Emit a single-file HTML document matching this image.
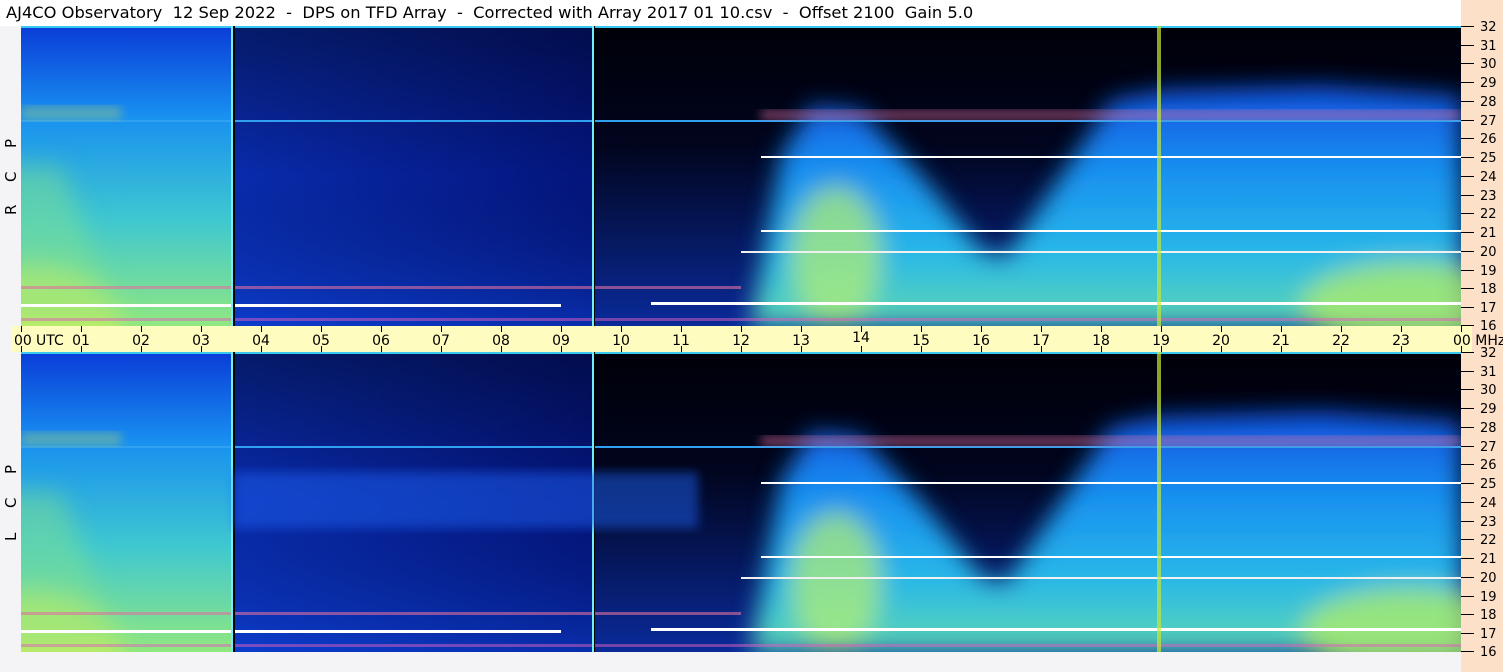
<!DOCTYPE html><html><head><style>
html,body{margin:0;padding:0;width:1503px;height:672px;overflow:hidden;background:#f4f4f7;font-family:"Liberation Sans",sans-serif}
#t{position:absolute;left:0;top:0;width:1503px;height:26px;background:#fff;font-family:"DejaVu Sans","Liberation Sans",sans-serif;font-size:16.3px;line-height:26px;white-space:pre;color:#000;padding-left:6px;box-sizing:border-box}
#r{position:absolute;left:1461px;top:0;width:42px;height:672px;background:#fde0c8}
svg{display:block}
</style></head><body>
<div id="t">AJ4CO Observatory  12 Sep 2022  -  DPS on TFD Array  -  Corrected with Array 2017 01 10.csv  -  Offset 2100  Gain 5.0</div>
<div id="r"></div>
<svg width="1503" height="672" style="position:absolute;left:0;top:0" xmlns="http://www.w3.org/2000/svg">
<defs>
<clipPath id="cp"><rect x="0" y="0" width="1440" height="300"/></clipPath>
<filter id="b" x="-10%" y="-10%" width="120%" height="120%"><feGaussianBlur stdDeviation="12"/></filter>
<filter id="b2"><feGaussianBlur stdDeviation="5"/></filter>
<linearGradient id="lg" x1="0" y1="0" x2="0" y2="1"><stop offset="0" stop-color="#0a3cd8"/><stop offset=".3" stop-color="#1890f0"/><stop offset=".65" stop-color="#40c8d0"/><stop offset="1" stop-color="#90e880"/></linearGradient>
<linearGradient id="mg" x1="0" y1="0" x2="1" y2="0"><stop offset="0" stop-color="#0a30c0"/><stop offset="1" stop-color="#04178a"/></linearGradient>
<linearGradient id="mv" x1="0" y1="0" x2="0" y2="1"><stop offset="0" stop-color="#000" stop-opacity=".45"/><stop offset=".5" stop-color="#000" stop-opacity=".1"/><stop offset="1" stop-color="#1050e0" stop-opacity=".4"/></linearGradient>
<linearGradient id="dg" x1="0" y1="0" x2="0" y2="1"><stop offset="0" stop-color="#000008"/><stop offset=".4" stop-color="#01051e"/><stop offset="1" stop-color="#0a2a9a"/></linearGradient>
<linearGradient id="cg" x1="0" y1="0" x2="0" y2="1"><stop offset="0" stop-color="#1050e0"/><stop offset=".35" stop-color="#1890f0"/><stop offset=".7" stop-color="#28b8e8"/><stop offset="1" stop-color="#60d8b0"/></linearGradient>
<g id="p">
<g clip-path="url(#cp)">
<rect x="0" y="0" width="1440" height="300" fill="#000"/>
<rect x="0" y="0" width="210" height="300" fill="url(#lg)"/>
<rect x="210" y="0" width="361" height="300" fill="url(#mg)"/>
<rect x="210" y="0" width="361" height="300" fill="url(#mv)"/>
<rect x="571" y="0" width="869" height="300" fill="url(#dg)"/>
<g filter="url(#b)">
<ellipse cx="10" cy="300" rx="90" ry="60" fill="#d8f050" opacity=".8"/>
<polygon points="100,300 40,140 -20,140 -20,300" fill="#80e090" opacity=".5"/>
<polygon points="730,300 760,130 790,80 840,85 900,150 960,225 985,232 1010,195 1060,120 1090,75 1140,65 1300,60 1440,70 1440,300" fill="url(#cg)"/>
<ellipse cx="815" cy="230" rx="45" ry="70" fill="#b8f070" opacity=".7"/>
<ellipse cx="1390" cy="280" rx="110" ry="45" fill="#b8f060" opacity=".7"/>
</g>
<rect x="0" y="0" width="1440" height="2" fill="#38c8f0"/>
<rect x="0" y="94" width="1440" height="2" fill="#30a0f0"/>
<rect x="740" y="84" width="700" height="10" fill="#e070a0" opacity=".55" filter="url(#b2)"/>
<rect x="0" y="80" width="100" height="14" fill="#d0e050" opacity=".35" filter="url(#b2)"/>
<rect x="740" y="130" width="700" height="2" fill="#fff"/>
<rect x="740" y="204" width="700" height="2" fill="#fff"/>
<rect x="720" y="225" width="720" height="2" fill="#f0f0f0"/>
<rect x="0" y="260" width="720" height="3" fill="#e070a0" opacity=".6"/>
<rect x="0" y="278" width="540" height="3" fill="#fff"/>
<rect x="630" y="276" width="810" height="3" fill="#fff"/>
<rect x="0" y="292" width="1440" height="3" fill="#e060c0" opacity=".5"/>
<rect x="1136" y="0" width="4" height="300" fill="#c8e830" opacity=".7"/>
<rect x="210" y="0" width="2" height="300" fill="#70f0ff"/>
<rect x="212" y="0" width="2" height="300" fill="#000"/>
<rect x="571" y="0" width="2" height="300" fill="#70f0ff"/>
<rect x="573" y="0" width="1" height="300" fill="#000"/>
</g>
</g>
</defs>
<use href="#p" x="21" y="26"/>
<use href="#p" x="21" y="352"/>
<rect x="234" y="472" width="464" height="56" fill="#1a60f0" opacity=".5" filter="url(#b2)"/>
<rect x="11" y="326" width="1461" height="26" fill="#fffcc0"/>
<g stroke="#000" stroke-width="1">
<path id="tk" d="M21.5 326v6M81.5 326v6M141.5 326v6M201.5 326v6M261.5 326v6M321.5 326v6M381.5 326v6M441.5 326v6M501.5 326v6M561.5 326v6M621.5 326v6M681.5 326v6M741.5 326v6M801.5 326v6M861.5 326v6M921.5 326v6M981.5 326v6M1041.5 326v6M1101.5 326v6M1161.5 326v6M1221.5 326v6M1281.5 326v6M1341.5 326v6M1401.5 326v6M1461.5 326v6"/>
<use href="#tk" y="20"/>
<path d="M1461 26.5h13M1461 45.5h13M1461 63.5h13M1461 82.5h13M1461 101.5h13M1461 120.5h13M1461 138.5h13M1461 157.5h13M1461 176.5h13M1461 195.5h13M1461 213.5h13M1461 232.5h13M1461 251.5h13M1461 270.5h13M1461 288.5h13M1461 307.5h13M1461 325.5h13"/>
<path d="M1461 352.5h13M1461 371.5h13M1461 389.5h13M1461 408.5h13M1461 427.5h13M1461 446.5h13M1461 464.5h13M1461 483.5h13M1461 502.5h13M1461 521.5h13M1461 539.5h13M1461 558.5h13M1461 577.5h13M1461 596.5h13M1461 614.5h13M1461 633.5h13M1461 651.5h13"/>
</g>
<g font-family="DejaVu Sans,Liberation Sans,sans-serif" font-size="14" fill="#000">
<text x="14" y="345">00</text><text x="36" y="345">UTC</text>
<g text-anchor="middle">
<text x="81" y="345">01</text><text x="141" y="345">02</text><text x="201" y="345">03</text><text x="261" y="345">04</text><text x="321" y="345">05</text><text x="381" y="345">06</text><text x="441" y="345">07</text><text x="501" y="345">08</text><text x="561" y="345">09</text><text x="621" y="345">10</text><text x="681" y="345">11</text><text x="741" y="345">12</text><text x="801" y="345">13</text><text x="861" y="342">14</text><text x="921" y="345">15</text><text x="981" y="345">16</text><text x="1041" y="345">17</text><text x="1101" y="345">18</text><text x="1161" y="345">19</text><text x="1221" y="345">20</text><text x="1281" y="345">21</text><text x="1341" y="345">22</text><text x="1401" y="345">23</text>
</g>
<text x="1453" y="345">00 MHz</text>
<g font-size="13">
<text x="1480" y="31">32</text><text x="1480" y="50">31</text><text x="1480" y="68">30</text><text x="1480" y="87">29</text><text x="1480" y="106">28</text><text x="1480" y="125">27</text><text x="1480" y="143">26</text><text x="1480" y="162">25</text><text x="1480" y="181">24</text><text x="1480" y="200">23</text><text x="1480" y="218">22</text><text x="1480" y="237">21</text><text x="1480" y="256">20</text><text x="1480" y="275">19</text><text x="1480" y="293">18</text><text x="1480" y="312">17</text><text x="1480" y="330">16</text>
<text x="1480" y="357">32</text><text x="1480" y="376">31</text><text x="1480" y="394">30</text><text x="1480" y="413">29</text><text x="1480" y="432">28</text><text x="1480" y="451">27</text><text x="1480" y="469">26</text><text x="1480" y="488">25</text><text x="1480" y="507">24</text><text x="1480" y="526">23</text><text x="1480" y="544">22</text><text x="1480" y="563">21</text><text x="1480" y="582">20</text><text x="1480" y="601">19</text><text x="1480" y="619">18</text><text x="1480" y="638">17</text><text x="1480" y="656">16</text>
</g>
<g font-size="15">
<text transform="translate(16,215) rotate(-90)">R</text><text transform="translate(16,182) rotate(-90)">C</text><text transform="translate(16,148) rotate(-90)">P</text>
<text transform="translate(16,541) rotate(-90)">L</text><text transform="translate(16,508) rotate(-90)">C</text><text transform="translate(16,474) rotate(-90)">P</text>
</g>
</g>
</svg>
</body></html>
